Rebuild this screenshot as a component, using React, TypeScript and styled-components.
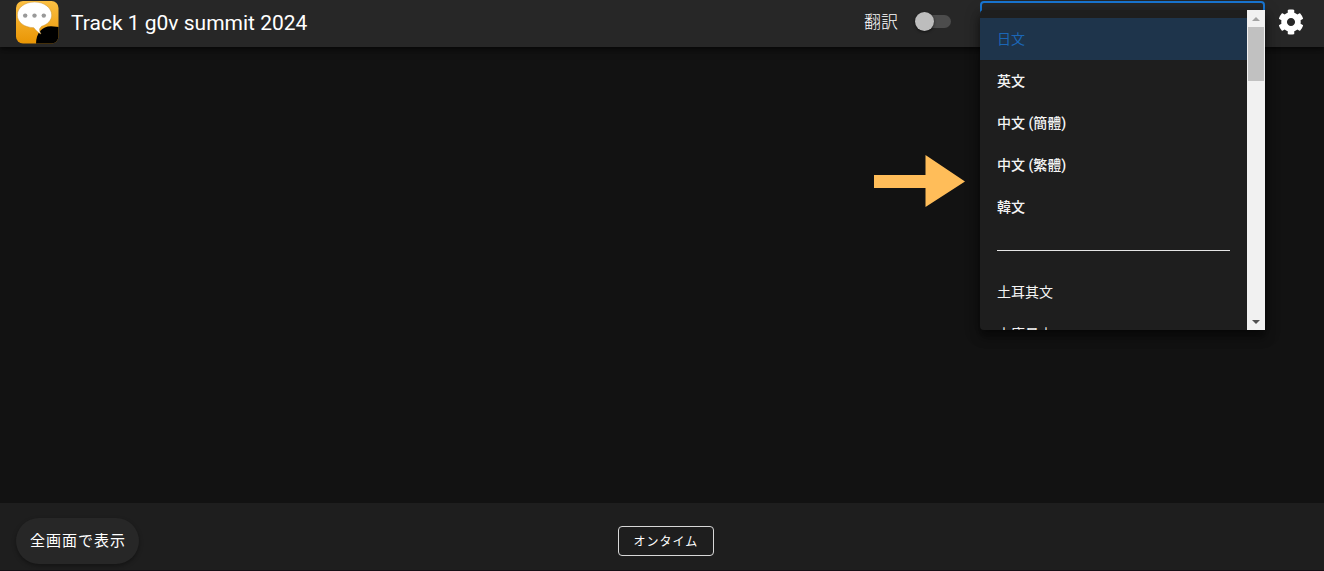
import React, { useState } from "react";
import styled, { createGlobalStyle } from "styled-components";
import { FaCog } from "react-icons/fa";

const GlobalStyle = createGlobalStyle`
  *, *::before, *::after { box-sizing: border-box; }
  html, body, #root { height: 100%; }
  body {
    margin: 0;
    overflow: hidden;
    background: #121212;
    color: #fff;
    font-family: Roboto, "Noto Sans CJK JP", sans-serif;
  }
  button, select { font-family: inherit; color: inherit; }
`;

const Page = styled.div`
  display: flex;
  flex-direction: column;
  height: 100%;
`;

const TopBar = styled.header`
  position: relative;
  z-index: 2;
  display: flex;
  align-items: flex-start;
  height: 47px;
  padding: 0 20px 0 16px;
  background: #272727;
  box-shadow: 0 2px 4px rgba(0, 0, 0, 0.4), 0 4px 8px rgba(0, 0, 0, 0.25);
`;

const Brand = styled.div`
  display: flex;
  flex: 1;
  align-items: center;
  gap: 12px;
  height: 44px;
`;

const Title = styled.h1`
  margin: 0;
  padding-top: 2px;
  font-size: 21px;
  line-height: 32px;
  font-weight: 400;
  white-space: nowrap;
`;

const SwitchLabel = styled.label`
  display: flex;
  align-items: center;
  gap: 17px;
  height: 43px;
  margin-right: 29px;
  font-size: 17px;
  line-height: 24px;
  font-weight: 300;
`;

const Switch = styled.input`
  appearance: none;
  display: flex;
  align-items: center;
  width: 36px;
  height: 20px;
  margin: 0;
  &::before {
    content: "";
    z-index: 1;
    width: 19px;
    height: 19px;
    border-radius: 50%;
    background: #bdbdbd;
    box-shadow: 0 1px 3px rgba(0, 0, 0, 0.6);
  }
  &::after {
    content: "";
    width: 27px;
    height: 13px;
    margin-left: -10px;
    border-radius: 7px;
    background: #4c4c4c;
  }
  &:checked::before { background: #1976d2; order: 1; margin-left: -10px; }
  &:checked::after { margin-left: 0; }
`;

const LanguagePicker = styled.div`
  position: relative;
  width: 285px;
  padding-top: 1px;
`;

const LanguageField = styled.select`
  display: block;
  appearance: none;
  width: 100%;
  height: 40px;
  padding: 0 16px;
  border: 2px solid #1976d2;
  border-radius: 4px;
  background: transparent;
  font-size: 14px;
  outline: none;
`;

const Menu = styled.div`
  position: absolute;
  top: 10px;
  left: 0;
  display: flex;
  width: 100%;
  height: 320px;
  overflow: hidden;
  border-radius: 4px 0 0 4px;
  background: #1e1e1e;
  box-shadow: 0 5px 5px -3px rgba(0, 0, 0, 0.2), 0 8px 10px 1px rgba(0, 0, 0, 0.3),
    0 3px 14px 2px rgba(0, 0, 0, 0.25);
`;

const Options = styled.ul`
  flex: 1;
  margin: 0;
  padding: 8px 0;
  overflow-y: auto;
  scrollbar-width: none;
  list-style: none;
`;

const Option = styled.li<{ $selected?: boolean; $pinned?: boolean }>`
  display: flex;
  align-items: center;
  height: 42px;
  padding: 0 17px;
  background: ${(p) => (p.$selected ? "#1e344b" : "transparent")};
  color: ${(p) => (p.$selected ? "#1b66b6" : "#f4f4f4")};
  font-size: 14px;
  line-height: 20px;
  font-weight: ${(p) => (p.$pinned && !p.$selected ? 500 : 400)};
  cursor: pointer;
`;

const DividerRow = styled.li`
  display: flex;
  align-items: center;
  height: 43px;
  padding: 1px 17px 0;
`;

const Divider = styled.hr`
  width: 100%;
  margin: 0;
  border: 0;
  border-top: 1px solid #e6e6e6;
`;

const ScrollTrack = styled.div`
  display: flex;
  flex-direction: column;
  align-items: center;
  width: 18px;
  background: #f1f1f1;
`;

const ScrollThumb = styled.div`
  width: 16px;
  height: 54px;
  margin-bottom: auto;
  background: #c1c1c1;
`;

const ScrollButton = styled.button`
  display: flex;
  align-items: center;
  justify-content: center;
  width: 18px;
  height: 17px;
  padding: 0;
  border: 0;
  background: transparent;
`;

const SettingsButton = styled.button`
  display: flex;
  align-items: center;
  height: 43px;
  margin-left: 13px;
  padding: 0;
  border: 0;
  background: transparent;
`;

const Stage = styled.main`
  position: relative;
  flex: 1;
`;

const Pointer = styled.svg`
  position: absolute;
  top: 108px;
  right: 359px;
`;

const BottomBar = styled.footer`
  display: grid;
  grid-template-columns: 1fr auto 1fr;
  align-items: center;
  height: 68px;
  padding: 8px 8px 0 16px;
  background: #1e1e1e;
  border-bottom: 1px solid #151015;
`;

const FullscreenButton = styled.button`
  justify-self: start;
  height: 46px;
  padding: 0 13px 2px 14px;
  border: 0;
  border-radius: 23px;
  background: #272727;
  box-shadow: 0 2px 4px rgba(0, 0, 0, 0.35);
  font-size: 15px;
  letter-spacing: 1px;
`;

const OnTimeButton = styled.button`
  height: 30px;
  padding: 0 15px;
  border: 1px solid #d8d8d8;
  border-radius: 4px;
  background: transparent;
  font-size: 12px;
  letter-spacing: 1px;
`;

const pinned = ["日文", "英文", "中文 (簡體)", "中文 (繁體)", "韓文"];
const others = ["土耳其文", "土庫曼文"];

function Logo() {
  return (
    <svg width="43" height="44" viewBox="0 0 43 44" aria-hidden="true">
      <defs>
        <linearGradient id="gold" x1="0" y1="0" x2="0" y2="1">
          <stop offset="0" stopColor="#fcc044" />
          <stop offset="1" stopColor="#e99503" />
        </linearGradient>
        <clipPath id="tile">
          <rect y="1" width="42.5" height="42.5" rx="7" />
        </clipPath>
      </defs>
      <g clipPath="url(#tile)">
        <rect y="1" width="43" height="43" fill="url(#gold)" />
        <path d="M20 44C20 33 26 26.500 35 26.300L43 27V44Z" fill="#000" />
        <path
          d="M18.500 2C28.500 2 35.700 8 35.700 15C35.700 20 32 24.300 25.500 26.300L23.500 29C23.500 31 24 32.500 25 34C22.500 33 20 30.500 17.800 27.700C8 27.500 1.300 22 1.300 15C1.300 8 8.500 2 18.500 2Z"
          fill="#fff"
          stroke="#c8963c"
          strokeWidth="0.500"
        />
        <g fill="#999">
          <circle cx="9.200" cy="15.600" r="2.200" />
          <circle cx="18.500" cy="15.600" r="2.200" />
          <circle cx="27.800" cy="15.600" r="2.200" />
        </g>
      </g>
    </svg>
  );
}

export default function App() {
  const [language, setLanguage] = useState("日文");
  const renderOption = (name: string) => (
    <Option
      key={name}
      role="option"
      aria-selected={name === language}
      $selected={name === language}
      $pinned={pinned.includes(name)}
      onClick={() => setLanguage(name)}
    >
      {name}
    </Option>
  );
  return (
    <Page>
      <GlobalStyle />
      <TopBar>
        <Brand>
          <Logo />
          <Title>Track 1 g0v summit 2024</Title>
        </Brand>
        <SwitchLabel>
          翻訳
          <Switch type="checkbox" role="switch" />
        </SwitchLabel>
        <LanguagePicker>
          <LanguageField aria-label="翻訳" value={language} onChange={(e) => setLanguage(e.target.value)}>
            {[...pinned, ...others].map((name) => <option key={name}>{name}</option>)}
          </LanguageField>
          <Menu>
            <Options role="listbox" aria-label="翻訳">
              {pinned.map(renderOption)}
              <DividerRow role="presentation">
                <Divider />
              </DividerRow>
              {others.map(renderOption)}
            </Options>
            <ScrollTrack>
              <ScrollButton aria-label="Scroll up">
                <svg width="8" height="4" viewBox="0 0 8 4"><path d="M0 4L4 0L8 4Z" fill="#a3a3a3" /></svg>
              </ScrollButton>
              <ScrollThumb />
              <ScrollButton aria-label="Scroll down">
                <svg width="8" height="4" viewBox="0 0 8 4"><path d="M0 0L4 4L8 0Z" fill="#505050" /></svg>
              </ScrollButton>
            </ScrollTrack>
          </Menu>
        </LanguagePicker>
        <SettingsButton aria-label="Settings">
          <FaCog size={26} />
        </SettingsButton>
      </TopBar>
      <Stage>
        <Pointer width="91" height="53" viewBox="0 0 91 53" aria-hidden="true">
          <path d="M0 20H51.500V0L91 26.500L51.500 52V33H0Z" fill="#ffbd59" />
        </Pointer>
      </Stage>
      <BottomBar>
        <FullscreenButton>全画面で表示</FullscreenButton>
        <OnTimeButton>オンタイム</OnTimeButton>
      </BottomBar>
    </Page>
  );
}
